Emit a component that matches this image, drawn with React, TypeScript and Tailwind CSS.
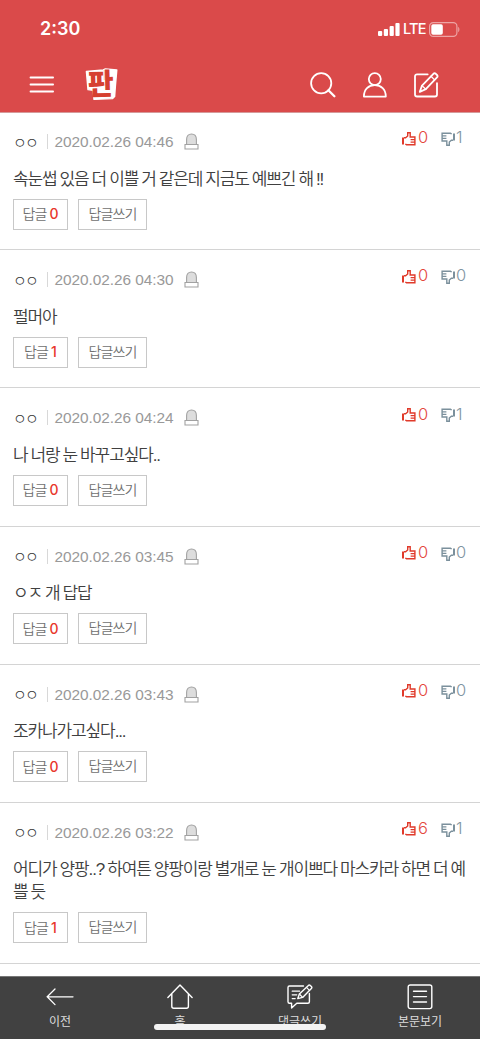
interface Comment {
  time: string;
  lines: string[];
  replies: number;
  likes: number;
  dislikes: number;
}

const comments: Comment[] = [
  { time: "04:46", lines: ["속눈썹 있음 더 이쁠 거 같은데 지금도 예쁘긴 해 !!"], replies: 0, likes: 0, dislikes: 1 },
  { time: "04:30", lines: ["펄머아"], replies: 1, likes: 0, dislikes: 0 },
  { time: "04:24", lines: ["나 너랑 눈 바꾸고싶다.."], replies: 0, likes: 0, dislikes: 1 },
  { time: "03:45", lines: ["ㅇㅈ 개 답답"], replies: 0, likes: 0, dislikes: 0 },
  { time: "03:43", lines: ["조카나가고싶다..."], replies: 0, likes: 0, dislikes: 0 },
  {
    time: "03:22",
    lines: ["어디가 양팡..? 하여튼 양팡이랑 별개로 눈 개이쁘다 마스카라 하면 더 예", "쁠 듯"],
    replies: 1,
    likes: 6,
    dislikes: 1,
  },
];

const StatusBar = (): JSX.Element => (
  <div className="h-[56px] pl-[40px] pr-[20px] pt-[2px] flex items-center justify-between text-white">
    <span className="font-['Inter'] text-[18px] font-semibold leading-none">2:30</span>
    <div className="flex items-center">
      <svg width="22" height="13" viewBox="0 0 22 13" fill="#fff">
        <rect x="0" y="8" width="4.2" height="5" rx="1" />
        <rect x="5.8" y="6" width="4.2" height="7" rx="1" />
        <rect x="11.6" y="3" width="4.2" height="10" rx="1" />
        <rect x="17.4" y="0" width="4.2" height="13" rx="1" />
      </svg>
      <span className="ml-[3px] w-[23px] font-['Inter'] text-[14.5px] tracking-[-0.8px] font-medium leading-none">LTE</span>
      <svg className="ml-[3px]" width="31" height="15" viewBox="0 0 31 15">
        <rect x="0.6" y="0.6" width="27.3" height="13.8" rx="3.6" fill="none" stroke="#eda4a4" strokeWidth="1.2" />
        <rect x="2.3" y="2.3" width="11.5" height="10.4" rx="1.7" fill="#fff" />
        <path d="M29.2 5v5c1.6-.6 1.6-4.4 0-5Z" fill="#eda4a4" />
      </svg>
    </div>
  </div>
);

const Logo = (): JSX.Element => (
  <svg className="overflow-visible" width="34" height="33" viewBox="0 0 34 33">
    <path d="M1.4 3.4 18.2 2l2.2-1 11.4 1-1.4 16-.8 10.600-2 2-18.600.8-.8-9.200-5.200-.6Z" fill="#fff" stroke="#fff" strokeWidth="1.4" strokeLinejoin="round" />
    <path d="M19.2 2v10" stroke="#eeb0aa" strokeWidth=".8" />
    <text
      x="0"
      y="0"
      fontSize="28"
      fontWeight="900"
      fill="#d64030"
      transform="translate(3.2 27) rotate(-1.5) scale(1 1.06)"
      className="font-['Noto_Sans_CJK_KR',sans-serif]"
    >
      판
    </text>
  </svg>
);

const Header = (): JSX.Element => (
  <header className="h-[113px] shrink-0 bg-[#da4a4a] border-b border-[#d59a9a]">
    <StatusBar />
    <div className="h-[56px] pt-px px-[29px] flex items-center">
      <svg width="25" height="18" viewBox="0 0 25 18" stroke="#fff" strokeWidth="1.8" strokeLinecap="round">
        <path d="M1.500 1.500h22.600M1.500 8.500h22.600M1.500 15.500h22.600" />
      </svg>
      <div className="ml-[30.5px]">
        <Logo />
      </div>
      <div className="ml-auto mr-[11px] flex items-center gap-[26px]">
        <svg width="27" height="26" viewBox="0 0 27 26" fill="none" stroke="#fff" strokeWidth="1.8" strokeLinecap="round">
          <circle cx="11.2" cy="11.2" r="10.1" />
          <path d="m18.4 18.2 6 6" strokeWidth="2.3" />
        </svg>
        <svg width="25" height="26" viewBox="0 0 25 26" fill="none" stroke="#fff" strokeWidth="1.8" strokeLinejoin="round">
          <circle cx="11.8" cy="7.1" r="6" />
          <path d="M.9 24.600C.9 17.500 5.500 13.200 11.800 13.200s11 4.300 11 11.400Z" />
        </svg>
        <svg width="26" height="26" viewBox="0 0 26 26" fill="none" stroke="#fff" strokeWidth="1.8" strokeLinecap="round" strokeLinejoin="round">
          <path d="M13.700 2.300H3a2 2 0 0 0-2 2v18.200a2 2 0 0 0 2 2h18a2 2 0 0 0 2-2V11.200" />
          <path d="m5.800 19.800 2.200-6.200L19.400 1.800q1.200-1 2.400 0l1.200 1.200q1.200 1.200 0 2.400L11.800 17.200Z" />
          <path d="m17 4.300 3.600 3.600M8 13.600l3.800 3.600" strokeWidth="1.300" />
        </svg>
      </div>
    </div>
  </header>
);

const ThumbIcon = ({ className }: { className?: string }): JSX.Element => (
  <svg className={className} width="14" height="14" viewBox="0 0 14 14" fill="none" stroke="currentColor">
    <path d="M1 5.5v7" strokeWidth="2" />
    <path d="M2 5.7h1.600L5.700 4V.8h2.500V5h4.700v7.700H4.500L3.300 12" strokeWidth="1.400" />
    <path d="M8.600 7.600H13M8.600 10.200H13" strokeWidth="1.200" />
  </svg>
);

const BellIcon = (): JSX.Element => (
  <svg width="15" height="17" viewBox="0 0 15 17" fill="#ddd" stroke="#a2a2a2" strokeWidth="1.1">
    <path d="M2.600 12V6.500C2.600 3 4.600 1 7.500 1s4.900 2 4.900 5.500V12" />
    <path d="M1 11.500h13V16H1Z" fill="#fff" />
  </svg>
);

const CommentRow = ({ comment }: { comment: Comment }): JSX.Element => (
  <li className="pt-[19.5px] pb-[19.7px] px-[13px] border-b border-[#d4d4d4]">
    <div className="relative h-[20px] flex items-center whitespace-nowrap">
      <span className="w-[34px] text-[15px] leading-[20px] tracking-[-1.8px] text-[#333]">ㅇㅇ</span>
      <span className="h-[15px] w-px bg-[#d8d8d8]" />
      <span className="ml-[6.5px] w-[129.5px] pt-px font-['Liberation_Sans'] text-[15.4px] leading-[20px] tracking-[-0.05px] text-[#999]">
        2020.02.26 {comment.time}
      </span>
      <BellIcon />
      <div className="absolute right-[1px] top-[-4px] h-[20px] flex items-center font-['Inter'] font-light text-[16.5px]">
        <ThumbIcon className="mt-[2px] text-[#e03a2a]" />
        <span className="ml-[2px] w-[10px] text-[#e4483c]">{comment.likes}</span>
        <ThumbIcon className="ml-[13px] mt-[3px] rotate-180 text-[#7b909c]" />
        <span className="ml-[1px] w-[10px] text-[#7f95a2]">{comment.dislikes}</span>
      </div>
    </div>
    <div className="relative top-[2px] mt-[14px] whitespace-nowrap font-['Liberation_Sans','Noto_Sans_CJK_KR',sans-serif] font-[350] text-[17px] leading-[23px] tracking-[-1.12px] [word-spacing:-0.6px] text-[#404040]">
      {comment.lines.map((line) => (
        <p className="h-[23px]" key={line}>{line}</p>
      ))}
    </div>
    <div className="mt-[10px] flex gap-[10px] text-[14px] tracking-[-0.9px] font-[350] text-[#707070]">
      <button className="h-[31px] w-[55px] pb-px border border-[#c8c8c8] flex items-center justify-center">
        답글<span className="ml-[3px] font-['Inter'] tracking-normal font-medium text-[#e8372c]">{comment.replies}</span>
      </button>
      <button className="h-[31px] w-[69px] pb-[2px] border border-[#c8c8c8]">답글쓰기</button>
    </div>
  </li>
);

const Footer = (): JSX.Element => (
  <nav className="relative mt-auto h-[63px] shrink-0 bg-[#414141] border-t border-[#777] grid grid-cols-4 text-[12px] leading-[16px] tracking-[-0.1px] font-normal text-[#ddd]">
    <a className="flex flex-col items-center pt-[7px]">
      <svg width="28" height="26" viewBox="0 0 28 26" fill="none" stroke="#fff" strokeWidth="1.3" strokeLinecap="round">
        <path d="M27 12.8H1.2M9 5 1.2 12.8 9 20.6" />
      </svg>
      <span className="mt-[3px]">이전</span>
    </a>
    <a className="flex flex-col items-center pt-[7px]">
      <svg width="26" height="26" viewBox="0 0 26 26" fill="none" stroke="#fff" strokeWidth="1.4" strokeLinecap="round" strokeLinejoin="round">
        <path d="M.9 13.4 13 .9l12.1 12.5M4.8 9.8v12.4a2 2 0 0 0 2 2h12.6a2 2 0 0 0 2-2V9.8" />
      </svg>
      <span className="mt-[3px]">홈</span>
    </a>
    <a className="flex flex-col items-center pt-[7px]">
      <svg width="26" height="26" viewBox="0 0 26 26" fill="none" stroke="#fff" strokeWidth="1.4" strokeLinecap="round" strokeLinejoin="round">
        <path d="M16.500 2H2.500A1.500 1.500 0 0 0 1 3.500v14.200a1.500 1.500 0 0 0 1.500 1.500H4.600V24l5.200-4.800h11.100a1.500 1.500 0 0 0 1.500-1.500V9.400" />
        <path d="m10.800 14.600 1.600-4.600 9-8.600q.9-.7 1.800 0l1.200 1.200q.9.900 0 1.800l-8.800 9Z" />
        <path d="m12.400 10 3.200 3.400M19.500 3.400l3 3M5.200 7.200h7.400M5.200 10.800h4.600M5.200 14.600h3" strokeWidth="1.200" />
      </svg>
      <span className="mt-[3px]">댓글쓰기</span>
    </a>
    <a className="flex flex-col items-center pt-[7px]">
      <svg width="26" height="26" viewBox="0 0 26 26" fill="none" stroke="#fff" strokeWidth="1.400" strokeLinecap="round">
        <rect x="1.200" y="1" width="23.600" height="23.600" rx="2" />
        <path d="M6.500 7.200h13M6.500 12.600h13M6.500 18h13" />
      </svg>
      <span className="mt-[3px]">본문보기</span>
    </a>
    <div className="absolute left-[154px] top-[47px] h-[6px] w-[172px] rounded-full bg-[#f3f3f3]" />
  </nav>
);

export default function App(): JSX.Element {
  return (
    <main className="w-[480px] h-[1039px] overflow-hidden flex flex-col bg-white font-light font-['Noto_Sans_CJK_KR',sans-serif]">
      <Header />
      <ul className="-mt-px">
        {comments.map((comment) => (
          <CommentRow key={comment.time} comment={comment} />
        ))}
      </ul>
      <Footer />
    </main>
  );
}
